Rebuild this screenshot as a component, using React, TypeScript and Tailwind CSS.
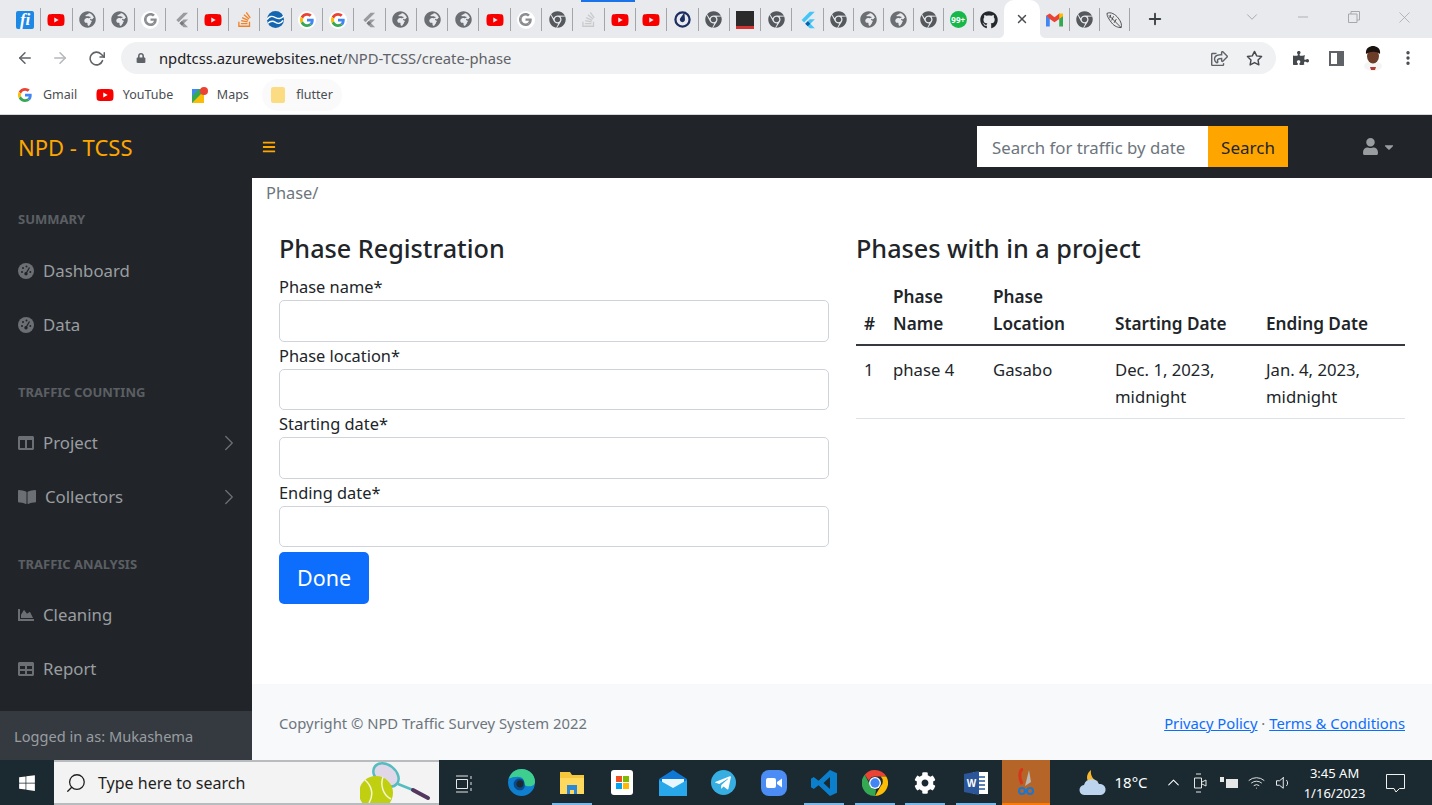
import React from "react";
import {
  FaBookOpen,
  FaBars,
  FaCaretDown,
  FaChartArea,
  FaChrome,
  FaCog,
  FaColumns,
  FaGithub,
  FaGlobeAfrica,
  FaLock,
  FaPuzzlePiece,
  FaRegShareSquare,
  FaStackOverflow,
  FaTable,
  FaTelegramPlane,
  FaUser,
  FaWindows,
  FaYoutube,
} from "react-icons/fa";
import {
  FiArrowLeft,
  FiArrowRight,
  FiChevronDown,
  FiChevronRight,
  FiChevronUp,
  FiMinus,
  FiMoreVertical,
  FiPlus,
  FiRotateCw,
  FiSearch,
  FiStar,
  FiVolume1,
  FiWifi,
  FiX,
} from "react-icons/fi";

const font = "font-['Noto_Sans','Open_Sans',sans-serif]";

function GoogleG({ size = 16, grey = false }: { size?: number; grey?: boolean }) {
  const c = grey ? ["#8a8c90", "#8a8c90", "#8a8c90", "#8a8c90"] : ["#4285f4", "#34a853", "#fbbc05", "#ea4335"];
  return (
    <svg width={size} height={size} viewBox="0 0 48 48">
      <path fill={c[3]} d="M24 9.500c3.500 0 6.700 1.200 9.200 3.600l6.900-6.900C35.900 2.400 30.500 0 24 0 14.600 0 6.500 5.400 2.600 13.200l8 6.200C12.500 13.600 17.800 9.500 24 9.500z" />
      <path fill={c[0]} d="M47 24.500c0-1.600-.1-3.100-.4-4.500H24v9h12.900c-.6 3-2.200 5.500-4.700 7.200l7.700 6C44.400 38 47 31.800 47 24.500z" />
      <path fill={c[2]} d="M10.600 28.600c-.5-1.400-.8-3-.8-4.600s.3-3.200.8-4.600l-8-6.200C.9 16.500 0 20.100 0 24s.9 7.500 2.600 10.800l8-6.200z" />
      <path fill={c[1]} d="M24 48c6.500 0 11.900-2.100 15.900-5.800l-7.700-6c-2.200 1.400-4.900 2.300-8.200 2.300-6.200 0-11.500-4.100-13.400-9.900l-8 6.200C6.500 42.600 14.600 48 24 48z" />
    </svg>
  );
}

function GreyG() {
  return (
    <span className="flex h-[18px] w-[18px] items-center justify-center rounded-full bg-white">
      <GoogleG size={13} grey />
    </span>
  );
}

function ColorG() {
  return (
    <span className="flex h-[18px] w-[18px] items-center justify-center rounded-full bg-white">
      <GoogleG size={14} />
    </span>
  );
}

function Yt({ w = 18 }: { w?: number }) {
  return <FaYoutube size={w} color="#f70000" />;
}

function FlutterIcon({ color = "#9a9b9f", dark = "#77787c", size = 16 }: { color?: string; dark?: string; size?: number }) {
  return (
    <svg width={size} height={size} viewBox="0 0 24 24">
      <path fill={color} d="M14.300 1 3.500 12l3.400 3.400L21.100 1z" />
      <path fill={color} d="M14.300 11.100 8.300 17l6 6h6.800l-6-6 6-5.900z" />
      <path fill={dark} d="M11.700 20.400 8.300 17l3.400-3.400 3.400 3.400z" />
    </svg>
  );
}

function TabIcon({ kind }: { kind: string }) {
  switch (kind) {
    case "alpha":
      return (
        <span className="flex h-[18px] w-[18px] items-center justify-center rounded-[2px] bg-[#1e88e5] font-['Liberation_Serif',serif] text-[17px] font-bold italic leading-none text-white">
          fi
        </span>
      );
    case "yt":
      return <Yt />;
    case "globe":
      return <FaGlobeAfrica size={17} color="#6b6e73" />;
    case "g-grey":
      return <GreyG />;
    case "g":
      return <ColorG />;
    case "flutter-grey":
      return <FlutterIcon />;
    case "flutter":
      return <FlutterIcon color="#45c5f7" dark="#0a5fa8" size={18} />;
    case "so":
      return <FaStackOverflow size={17} color="#f48024" />;
    case "so-grey":
      return <FaStackOverflow size={17} color="#c9cacc" />;
    case "wave":
      return (
        <svg width="17" height="17" viewBox="0 0 18 18">
          <circle cx="9" cy="9" r="9" fill="#1566b0" />
          <path d="M0 9c3-4 5-4 9-2s6 1 9-2M1 13c3-3 5-3 8-1s6 1 8-2" stroke="#fff" strokeWidth="1.500" fill="none" />
        </svg>
      );
    case "chrome":
      return <FaChrome size={17} color="#55585c" />;
    case "matter":
      return (
        <svg width="17" height="17" viewBox="0 0 18 18">
          <circle cx="9" cy="9" r="7.500" fill="none" stroke="#1c2f63" strokeWidth="2.400" />
          <path d="M11 1.500 11.600 9a2.700 2.700 0 1 1-5 -1.300z" fill="#1c2f63" />
        </svg>
      );
    case "dark":
      return (
        <span className="flex h-[18px] w-[18px] flex-col bg-[#2b2b2b]">
          <span className="mt-auto h-[3px] bg-[#d63232]" />
        </span>
      );
    case "whatsapp":
      return (
        <span className="flex h-[17px] w-[17px] items-center justify-center rounded-full bg-[#16b84a] text-[8px] font-bold leading-none text-white">
          99+
        </span>
      );
    case "github":
      return <FaGithub size={18} color="#24292e" />;
    case "gmail":
      return (
        <svg width="17" height="14" viewBox="0 0 18 14">
          <path d="M0 2.500 0 14h4V5z" fill="#4285f4" />
          <path d="M14 5v9h4V2.500z" fill="#34a853" />
          <path d="M0 2.500 4 0l5 4 5-4 4 2.500L14 6 9 9.500 4 6z" fill="#ea4335" />
          <path d="M14 0l4 0v3l-4 3z" fill="#fbbc05" />
        </svg>
      );
    case "feather":
      return (
        <svg width="17" height="18" viewBox="0 0 18 18" fill="none" stroke="#3a3a3a" strokeWidth="0.900">
          <path d="M1 2c4-2 9 1 12 5s4 7 3 10c-3 0-7-1-10-5S1 5 1 2zM3 4l13 13M5 3.500 4 7M8 5 6 9.500M11 8 8.500 12" />
        </svg>
      );
    default:
      return null;
  }
}

const wideTabs = [
  "alpha", "yt", "globe", "globe", "g-grey", "flutter-grey", "yt", "so", "wave", "g", "g", "flutter-grey", "globe",
  "globe", "globe", "yt", "g-grey", "chrome", "so-grey", "yt", "yt", "matter", "chrome", "dark", "chrome", "flutter",
];
const narrowTabs = ["chrome", "globe", "globe", "chrome", "whatsapp", "github"];

function Tab({ kind, narrow, last }: { kind: string; narrow?: boolean; last?: boolean }) {
  return (
    <div className={`flex h-[38px] items-center ${narrow ? "w-[30px]" : "w-[31.3px]"}`}>
      <div className="flex flex-1 items-center justify-center pt-[1px]">
        <TabIcon kind={kind} />
      </div>
      {!last && <div className="h-[23px] w-px bg-[#a3a5a9]" />}
    </div>
  );
}

function TabStrip() {
  return (
    <div className="relative flex h-[38px] items-center bg-[#e8eaed] pl-[10px]">
      <div className="absolute left-[581px] top-0 h-[2px] w-[54px] bg-[#1a73e8]" />
      {wideTabs.map((k, i) => (
        <Tab key={i} kind={k} />
      ))}
      {narrowTabs.map((k, i) => (
        <Tab key={i} kind={k} narrow last={i === narrowTabs.length - 1} />
      ))}
      <div className="relative flex h-[38px] w-[36px] items-center justify-center rounded-t-[10px] bg-white">
        <svg width="5" height="5" viewBox="0 0 5 5" className="absolute bottom-0 left-[-5px]">
          <path d="M5 0v5H0a5 5 0 0 0 5-5z" fill="#fff" />
        </svg>
        <FiX size={14} color="#4a4d51" strokeWidth={2.500} />
        <svg width="5" height="5" viewBox="0 0 5 5" className="absolute bottom-0 right-[-5px]">
          <path d="M0 0v5h5a5 5 0 0 1-5-5z" fill="#fff" />
        </svg>
      </div>
      <Tab kind="gmail" narrow />
      <Tab kind="chrome" narrow />
      <Tab kind="feather" narrow />
      <div className="flex w-[50px] justify-center">
        <FiPlus size={18} color="#3c4043" strokeWidth={2.500} />
      </div>
      <div className="ml-[57px] flex items-center text-[#a6a8ac]">
        <div className="flex w-[30px] justify-center pb-1">
          <FiChevronDown size={18} strokeWidth={1.300} />
        </div>
        <div className="ml-[21px] flex w-[30px] justify-center pb-1">
          <FiMinus size={16} strokeWidth={1.300} />
        </div>
        <div className="ml-[21px] flex w-[30px] justify-center pb-1">
          <svg width="12" height="12" viewBox="0 0 12 12" fill="none" stroke="#a6a8ac">
            <path d="M.5 3h8.500v8.500H.5zM3 3V.5h8.500V9H9" />
          </svg>
        </div>
        <div className="ml-[21px] flex w-[30px] justify-center pb-1">
          <FiX size={19} strokeWidth={1} />
        </div>
      </div>
    </div>
  );
}

function Toolbar() {
  return (
    <div className="flex h-[38px] items-center bg-white pl-[16px] pt-[2px] text-[#5f6368]">
      <FiArrowLeft size={18} strokeWidth={2} />
      <FiArrowRight size={18} strokeWidth={2} color="#b5b7ba" className="ml-[17px]" />
      <FiRotateCw size={17} strokeWidth={2.200} className="ml-[19px]" />
      <div className="ml-[16px] flex h-[32px] w-[1155px] items-center rounded-full bg-[#f0f1f3] pl-[15px] pr-[12px]">
        <FaLock size={10} color="#5f6368" />
        <span className="ml-[13px] text-[14.750px] leading-none text-[#202124]">npdtcss.azurewebsites.net</span>
        <span className="text-[14.750px] leading-none text-[#5f6368]">/NPD-TCSS/create-phase</span>
        <FaRegShareSquare size={17} className="ml-auto" />
        <FiStar size={17} className="ml-[18px] mr-[1px]" color="#45484c" strokeWidth={2} />
      </div>
      <FaPuzzlePiece size={16} color="#45484c" className="ml-[17px]" />
      <div className="ml-[20px] flex h-[15px] w-[15px] justify-end border-2 border-[#5f6368]">
        <div className="h-full w-[5px] bg-[#5f6368]" />
      </div>
      <svg width="20" height="26" viewBox="0 0 20 26" className="ml-[19px]">
        <ellipse cx="10" cy="21" rx="9" ry="5" fill="#f4f4f4" />
        <ellipse cx="10" cy="11" rx="6" ry="7.500" fill="#6b3c28" />
        <path d="M3 9c-1-6 4-8 7-8s8 2 7 8c-3-3-10-3-14 0z" fill="#1b120d" />
        <path d="M7 22h6l-1 3H8z" fill="#b23a2e" />
      </svg>
      <FiMoreVertical size={18} className="ml-[16px]" color="#45484c" strokeWidth={2.500} />
    </div>
  );
}

function Bookmark({ icon, label, pad }: { icon: React.ReactNode; label: string; pad?: boolean }) {
  return (
    <div className={`flex h-[32px] items-center gap-[9px] ${pad ? "rounded-full bg-[#fafafa] px-[9px]" : ""}`}>
      {icon}
      <span className="text-[12.500px] leading-none text-[#4a4d51]">{label}</span>
    </div>
  );
}

function Bookmarks() {
  return (
    <div className="flex h-[39px] items-center gap-[18.500px] border-b border-[#d6d7d9] bg-white pl-[18px]">
      <Bookmark
        icon={
          <span className="w-[16px]">
            <GoogleG size={14} />
          </span>
        }
        label="Gmail"
      />
      <Bookmark icon={<Yt />} label="YouTube" />
      <Bookmark
        icon={
          <svg width="16" height="16" viewBox="0 0 16 16">
            <path d="M0 2h12v14H0z" fill="#34a853" />
            <path d="M0 2h7L0 9z" fill="#4285f4" />
            <path d="M0 16 12 4v12z" fill="#fbbc05" />
            <circle cx="12" cy="4" r="4" fill="#ea4335" />
          </svg>
        }
        label="Maps"
      />
      <div className="-ml-[5px]">
        <Bookmark icon={<div className="mr-[2px] h-[16px] w-[14px] rounded-[2px] bg-[#fbdc82]" />} label="flutter" pad />
      </div>
    </div>
  );
}

function Gauge() {
  return (
    <svg width="16" height="16" viewBox="0 0 16 16">
      <circle cx="8" cy="8" r="8" fill="#6c7074" />
      <g fill="#212529">
        <circle cx="4" cy="9" r="1" />
        <circle cx="5" cy="5" r="1" />
        <circle cx="8.500" cy="3.500" r="1" />
        <circle cx="12.300" cy="9" r="1" />
        <circle cx="8" cy="10.800" r="1.700" />
      </g>
      <path d="M8 10.500 11.500 4.500" stroke="#212529" strokeWidth="1.300" />
    </svg>
  );
}

function NavHeading({ children, first }: { children: string; first?: boolean }) {
  return (
    <div className={`pl-[18px] text-[13px] font-bold leading-[18px] text-[#5b5f63] ${first ? "pt-[32px]" : "pt-[31px]"}`}>
      {children}
    </div>
  );
}

function NavItem({ icon, label, chevron, wide }: { icon: React.ReactNode; label: string; chevron?: boolean; wide?: boolean }) {
  return (
    <div className="flex h-[54px] items-center pl-[18px] pr-[10px] text-[16.800px] text-[#9a9da0]">
      <span className={`flex justify-center text-[#6c7074] ${wide ? "w-[18px]" : "w-[16px]"}`}>{icon}</span>
      <span className="ml-[9px]">{label}</span>
      {chevron && <FiChevronRight size={26} color="#6c7074" strokeWidth={1.200} className="ml-auto" />}
    </div>
  );
}

function Sidebar() {
  return (
    <aside className="flex w-[252px] shrink-0 flex-col bg-[#212529]">
      <div className="flex-1">
        <NavHeading first>SUMMARY</NavHeading>
        <div className="pt-[16px]">
          <NavItem icon={<Gauge />} label="Dashboard" />
          <NavItem icon={<Gauge />} label="Data" />
        </div>
        <NavHeading>TRAFFIC COUNTING</NavHeading>
        <div className="pt-[15px]">
          <NavItem icon={<FaColumns size={16} />} label="Project" chevron />
          <NavItem icon={<FaBookOpen size={18} />} label="Collectors" chevron wide />
        </div>
        <NavHeading>TRAFFIC ANALYSIS</NavHeading>
        <div className="pt-[15px]">
          <NavItem icon={<FaChartArea size={16} />} label="Cleaning" />
          <NavItem icon={<FaTable size={16} />} label="Report" />
        </div>
      </div>
      <div className="flex h-[49px] items-center bg-[#343a40] pl-[14px] pt-[2px] text-[14.600px] text-[#9a9da0]">
        Logged in as: Mukashema
      </div>
    </aside>
  );
}

function Field({ label }: { label: string }) {
  return (
    <div className="mb-[1px]">
      <label className="block text-[16.400px] leading-[26px] text-[#212529]">{label}</label>
      <input className="block h-[41.600px] w-full rounded-[5px] border border-[#ced4da] bg-white" />
    </div>
  );
}

function Main() {
  return (
    <main className="flex min-w-0 flex-1 flex-col bg-white">
      <div className="h-[30px] pl-[14px] text-[16.400px] leading-[29px] text-[#6c757d]">Phase/</div>
      <div className="flex flex-1 gap-[27px] pl-[27px] pr-[27px] pt-[23px]">
        <div className="w-[550px]">
          <h2 className="mb-[9px] text-[25.200px] font-medium leading-[34px] text-[#212529]">Phase Registration</h2>
          <Field label="Phase name*" />
          <Field label="Phase location*" />
          <Field label="Starting date*" />
          <Field label="Ending date*" />
          <button className="mt-[3.600px] h-[52px] w-[90px] rounded-[5px] bg-[#0d6efd] text-[21.500px] text-white">Done</button>
        </div>
        <div className="flex-1">
          <h2 className="mb-[18px] text-[25.200px] font-medium leading-[34px] text-[#212529]">Phases with in a project</h2>
          <table className="w-full border-collapse text-left text-[16.700px] leading-[27px] text-[#212529]">
            <thead>
              <tr className="border-b-[2px] border-[#343a40] align-bottom text-[17.200px]">
                <th className="w-[37px] pb-[7px] pl-[8px] font-semibold">#</th>
                <th className="w-[100px] pb-[7px] pl-0 font-semibold">Phase Name</th>
                <th className="w-[122px] pb-[7px] font-semibold">Phase Location</th>
                <th className="w-[151px] pb-[7px] font-semibold">Starting Date</th>
                <th className="pb-[7px] font-semibold">Ending Date</th>
              </tr>
            </thead>
            <tbody>
              <tr className="border-b border-[#dee2e6] align-top">
                <td className="pb-[8px] pl-[8px] pt-[10px]">1</td>
                <td className="pb-[8px] pt-[10px]">phase 4</td>
                <td className="pb-[8px] pt-[10px]">Gasabo</td>
                <td className="pb-[8px] pr-[20px] pt-[10px]">Dec. 1, 2023, midnight</td>
                <td className="pb-[8px] pr-[20px] pt-[10px]">Jan. 4, 2023, midnight</td>
              </tr>
            </tbody>
          </table>
        </div>
      </div>
      <footer className="flex h-[76px] items-center justify-between bg-[#f8f9fa] px-[27px] pt-[2px] text-[14.800px] text-[#6c757d]">
        <span>Copyright © NPD Traffic Survey System 2022</span>
        <span>
          <a className="text-[#0d6efd] underline">Privacy Policy</a>
          {" · "}
          <a className="text-[#0d6efd] underline">Terms &amp; Conditions</a>
        </span>
      </footer>
    </main>
  );
}

function Navbar() {
  return (
    <header className="flex h-[63px] shrink-0 items-center bg-[#212529]">
      <div className="w-[252px] pl-[18px] pt-[2px] text-[22px] text-[#ffa500]">NPD - TCSS</div>
      <FaBars size={14} color="#ffa500" className="ml-[10px]" />
      <div className="ml-[701px] flex h-[41px]">
        <input
          placeholder="Search for traffic by date"
          className="h-full w-[231px] bg-white pl-[15px] pt-[2px] text-[16.800px] placeholder:text-[#6c757d]"
        />
        <button className="h-full w-[80px] bg-[#ffa500] pt-[2px] text-[17px] text-[#212529]">Search</button>
      </div>
      <FaUser size={17} color="#9a9da0" className="ml-[74px]" />
      <FaCaretDown size={14} color="#9a9da0" className="ml-[3px]" />
    </header>
  );
}

function ColorChrome() {
  return (
    <svg width="26" height="26" viewBox="0 0 24 24">
      <path d="M12 0a12 12 0 0 1 10.400 6H12a6 6 0 0 0-5.700 4L2.500 4.400A12 12 0 0 1 12 0z" fill="#ea4335" />
      <path d="M22.400 6A12 12 0 0 1 12 24l5.200-9a6 6 0 0 0 0-9z" fill="#fbbc05" />
      <path d="M12 24A12 12 0 0 1 2.500 4.400L7 13a6 6 0 0 0 6 5z" fill="#34a853" />
      <circle cx="12" cy="12" r="5.500" fill="#fff" />
      <circle cx="12" cy="12" r="4.300" fill="#4285f4" />
    </svg>
  );
}

function EdgeIcon() {
  return (
    <svg width="27" height="27" viewBox="0 0 28 28">
      <circle cx="14" cy="14" r="14" fill="#0f7fd0" />
      <path d="M1 10C3 3 9 0 14 0c8 0 14 6 14 13 0 3-2 5-6 5-3 0-5-1-5-3 0-4-2-7-7-7-4 0-7 1-9 2z" fill="#3ecf8e" />
      <path d="M17 15c1 3 0 6-3 7-5 1-9-3-8-8 1-3 4-5 7-4 3 0 4 3 4 5z" fill="#0a4a8a" />
      <path d="M16 15c0 3-2 5-5 4-2-1-3-3-2-5 1-2 3-3 5-2s2 2 2 3z" fill="#1b2a30" />
    </svg>
  );
}

function Running({ children, on = true }: { children: React.ReactNode; on?: boolean }) {
  return (
    <div className="flex h-[45px] w-[40px] flex-col items-center">
      <div className="flex flex-1 items-center justify-center pt-[2px]">{children}</div>
      {on ? <div className="h-[2px] w-full bg-[#76b9ed]" /> : <div className="h-[2px]" />}
    </div>
  );
}

function Taskbar() {
  return (
    <div className="flex h-[45px] shrink-0 items-center bg-[#1a2a30] text-white">
      <div className="flex w-[54px] justify-center">
        <FaWindows size={18} />
      </div>
      <div className="flex h-[45px] w-[385px] items-center justify-between overflow-hidden border-y-[2px] border-[#b8bcbe] bg-[#f3f3f3] pl-[11px] pr-[7px]">
        <div className="flex items-center gap-[11px]">
          <FiSearch size={22} color="#1f1f1f" className="-scale-x-100" strokeWidth={1.400} />
          <span className="text-[16px] text-[#1f1f1f]">Type here to search</span>
        </div>
        <svg width="72" height="41" viewBox="0 0 72 41">
          <ellipse cx="26" cy="13" rx="14" ry="10" transform="rotate(38 26 13)" fill="#e0d8e8" stroke="#55bcc0" strokeWidth="2.500" />
          <path d="M38 22 53 28" stroke="#55bcc0" strokeWidth="2.500" />
          <path d="M53 28 68 36" stroke="#53375f" strokeWidth="4" strokeLinecap="round" />
          <circle cx="16" cy="31" r="17" fill="#c0cf10" />
          <path d="M5 18c7 6 9 15 4 23M23 15c-3 8 0 18 8 22" fill="none" stroke="#f4f7d0" strokeWidth="1.500" />
        </svg>
      </div>
      <div className="flex w-[51px] justify-center pt-[2px]">
        <svg width="17" height="18" viewBox="0 0 17 18" fill="none" stroke="#e6e6e6">
          <path d="M.5 4.500h11v9H.5zM0 1h12M0 17h12M15 1v3M15 7v3M15 13v3" />
        </svg>
      </div>
      <div className="ml-[11px] flex gap-[10.500px]">
        <Running on={false}>
          <EdgeIcon />
        </Running>
        <Running>
          <svg width="24" height="22" viewBox="0 0 24 22">
            <path d="M0 0h10l2 3h12v19H0z" fill="#f6c73c" />
            <path d="M0 6h24v16H0z" fill="#ffd95e" />
            <path d="M7 13h10v9h-3v-4h-4v4H7z" fill="#2b88d8" />
          </svg>
        </Running>
        <Running on={false}>
          <div className="flex h-[25px] w-[22px] items-center justify-center rounded-[3px] bg-white">
            <div className="grid grid-cols-2 gap-px">
              <span className="h-[6px] w-[6px] bg-[#f25022]" />
              <span className="h-[6px] w-[6px] bg-[#7fba00]" />
              <span className="h-[6px] w-[6px] bg-[#00a4ef]" />
              <span className="h-[6px] w-[6px] bg-[#ffb900]" />
            </div>
          </div>
        </Running>
        <Running on={false}>
          <svg width="28" height="26" viewBox="0 0 28 26">
            <path d="M0 9 14 0l14 9v17H0z" fill="#0f78d4" />
            <path d="M3 9h22v6L14 20 3 15z" fill="#e8f7fd" />
            <path d="M0 10l14 8 14-8v16H0z" fill="#28a8ea" />
          </svg>
        </Running>
        <Running on={false}>
          <span className="flex h-[25px] w-[25px] items-center justify-center rounded-full bg-[#37aee2]">
            <FaTelegramPlane size={18} color="#fff" />
          </span>
        </Running>
        <Running on={false}>
          <span className="flex h-[26px] w-[26px] items-center justify-center rounded-[8px] bg-[#4c8cf5]">
            <svg width="16" height="10" viewBox="0 0 16 10" fill="#fff">
              <rect width="10" height="10" rx="2" />
              <path d="M11 4l5-3.500v9L11 6z" />
            </svg>
          </span>
        </Running>
        <Running>
          <svg width="26" height="26" viewBox="0 0 24 24">
            <path d="M17.500 0 24 3v18l-6.500 3L7 14l-4.500 3.500L0 16V8l2.500-1.500L7 10zM17.500 6.500 11.500 12l6 5.500z" fill="#0b7fcc" />
          </svg>
        </Running>
        <Running>
          <ColorChrome />
        </Running>
        <Running>
          <FaCog size={22} color="#fff" />
        </Running>
        <Running>
          <svg width="24" height="24" viewBox="0 0 24 24">
            <path d="M9 1h15v22H9z" fill="#fff" />
            <path d="M12 6h9M12 10h9M12 14h9M12 18h9" stroke="#2b579a" strokeWidth="1.500" />
            <path d="M0 3 15 0v24L0 21z" fill="#2b579a" />
            <text x="7.500" y="16" fontSize="10" fontWeight="bold" textAnchor="middle" fill="#fff" fontFamily="Liberation Sans">
              W
            </text>
          </svg>
        </Running>
      </div>
      <div className="ml-[6px] flex h-[45px] w-[48px] flex-col items-center bg-[#b46527]">
        <div className="flex flex-1 items-center justify-center">
          <svg width="16" height="28" viewBox="0 0 16 28" fill="none">
            <path d="M5 1C1 2 1 10 4 16" stroke="#d9351c" strokeWidth="3" />
            <path d="M11 2l2 12-6 4" fill="#b8b8b8" />
            <circle cx="4" cy="23" r="3" stroke="#1976d2" strokeWidth="2" />
            <circle cx="12" cy="23" r="3" stroke="#1976d2" strokeWidth="2" />
          </svg>
        </div>
        <div className="h-[2px] w-full bg-[#ff7a00]" />
      </div>
      <div className="ml-[29px] flex items-center">
        <svg width="28" height="28" viewBox="0 0 28 28">
          <path d="M12 1c-4 3-5 8-3 11 3 3 8 3 10 0-4 0-8-5-7-11z" fill="#f8b72c" />
          <path d="M6 26a5 5 0 0 1-1-10 8 8 0 0 1 15-1 5.500 5.500 0 0 1 2 11z" fill="#bcd4ee" />
        </svg>
        <span className="ml-[8px] text-[15px]">18°C</span>
      </div>
      <FiChevronUp size={19} strokeWidth={1.300} className="ml-[16px]" />
      <svg width="14" height="20" viewBox="0 0 14 20" fill="none" stroke="#e6e6e6" className="ml-[10px]">
        <path d="M3 1h5M3 19h5M1.500 5h7v10h-7zM9 9l4-2v6l-4-2" />
      </svg>
      <svg width="19" height="14" viewBox="0 0 19 14" className="ml-[13px]">
        <path d="M0 1h4v5H0zM6 3h12v9H6z" fill="#e6e6e6" />
      </svg>
      <FiWifi size={17} strokeWidth={1.200} className="ml-[9px]" />
      <FiVolume1 size={18} strokeWidth={1.200} className="ml-[10px]" />
      <div className="ml-[5px] flex w-[74px] flex-col items-center text-[13px] leading-[20px]">
        <span>3:45 AM</span>
        <span>1/16/2023</span>
      </div>
      <svg width="20" height="20" viewBox="0 0 20 20" fill="none" stroke="#f0f0f0" className="ml-[14px]">
        <path d="M.5 1.500h18v14h-5l-3.500 3.500-2-3.500H.5z" />
      </svg>
    </div>
  );
}

export default function App() {
  return (
    <div className={`flex h-[805px] w-[1432px] flex-col overflow-hidden bg-white ${font}`}>
      <TabStrip />
      <Toolbar />
      <Bookmarks />
      <Navbar />
      <div className="flex min-h-0 flex-1">
        <Sidebar />
        <Main />
      </div>
      <Taskbar />
    </div>
  );
}
